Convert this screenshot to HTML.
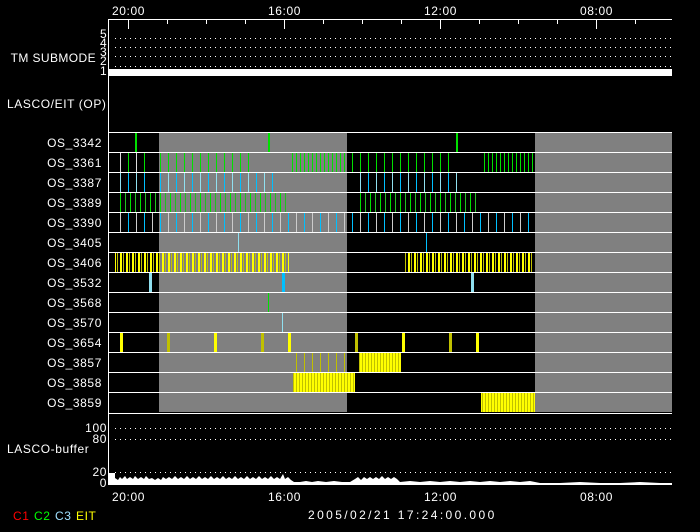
<!DOCTYPE html>
<html><head><style>
html,body{margin:0;padding:0;background:#000;width:700px;height:532px;overflow:hidden}
svg{display:block}
text{font-family:"Liberation Sans",sans-serif;font-size:12px;fill:#fff;letter-spacing:0.6px}
</style></head><body>
<svg width="700" height="532" viewBox="0 0 700 532" xmlns="http://www.w3.org/2000/svg">
<defs>
<pattern id="g8" width="8" height="20" patternUnits="userSpaceOnUse"><rect x="0" width="1" height="20" fill="#00e000"/></pattern>
<pattern id="g4" width="4" height="20" patternUnits="userSpaceOnUse"><rect x="0" width="1" height="20" fill="#00e000"/></pattern>
<pattern id="gw8" width="16" height="20" patternUnits="userSpaceOnUse"><rect x="0" width="1" height="20" fill="#00e000"/><rect x="8" width="1" height="20" fill="#ddd"/></pattern>
<pattern id="gm5" width="10" height="20" patternUnits="userSpaceOnUse"><rect x="0" width="1" height="20" fill="#00e000"/><rect x="5" width="1" height="20" fill="#20c020"/></pattern>
<pattern id="c8" width="16" height="20" patternUnits="userSpaceOnUse"><rect x="0" width="1" height="20" fill="#00c0ff"/><rect x="8" width="1" height="20" fill="#90e0f0"/></pattern>
<pattern id="cw8" width="16" height="20" patternUnits="userSpaceOnUse"><rect x="0" width="1" height="20" fill="#00c0ff"/><rect x="8" width="1" height="20" fill="#ccc"/></pattern>
<pattern id="y3" width="6" height="20" patternUnits="userSpaceOnUse"><rect x="0" width="2" height="20" fill="#ffff00"/><rect x="3" width="1" height="20" fill="#c0c000"/></pattern>
<pattern id="yd" width="3" height="20" patternUnits="userSpaceOnUse"><rect x="0" width="2" height="20" fill="#ffff00"/><rect x="2" width="1" height="20" fill="#c0c000"/></pattern>
<pattern id="y8" width="8" height="20" patternUnits="userSpaceOnUse"><rect x="0" width="1" height="20" fill="#c0c000"/></pattern>
<pattern id="dots" width="5" height="1" patternUnits="userSpaceOnUse"><rect width="1" height="1" fill="#fff"/></pattern>
</defs>

<rect x="108" y="19" width="564" height="1" fill="#fff"/>
<rect x="108" y="19" width="1" height="466" fill="#fff"/>
<g fill="#fff">
<rect x="128" y="19" width="1" height="10"/><rect x="167" y="19" width="1" height="5"/><rect x="206" y="19" width="1" height="5"/><rect x="245" y="19" width="1" height="5"/>
<rect x="284" y="19" width="1" height="10"/><rect x="323" y="19" width="1" height="5"/><rect x="362" y="19" width="1" height="5"/><rect x="401" y="19" width="1" height="5"/>
<rect x="440" y="19" width="1" height="10"/><rect x="479" y="19" width="1" height="5"/><rect x="518" y="19" width="1" height="5"/><rect x="557" y="19" width="1" height="5"/>
<rect x="596" y="19" width="1" height="10"/><rect x="635" y="19" width="1" height="5"/>
</g>
<g style="letter-spacing:1.2px"><text x="112" y="15">20:00</text><text x="268" y="15">16:00</text><text x="424" y="15">12:00</text><text x="580" y="15">08:00</text></g>

<rect x="113" y="38" width="559" height="1" fill="url(#dots)"/>
<rect x="113" y="47" width="559" height="1" fill="url(#dots)"/>
<rect x="113" y="56" width="559" height="1" fill="url(#dots)"/>
<rect x="113" y="66" width="559" height="1" fill="url(#dots)"/>
<rect x="109" y="69" width="563" height="7" fill="#fff"/>
<text x="96" y="62" text-anchor="end" style="letter-spacing:0.4px">TM SUBMODE</text>
<g style="font-size:10px;letter-spacing:0"><text x="100" y="38">5</text><text x="100" y="47">4</text><text x="100" y="56">3</text><text x="100" y="65">2</text><text x="100" y="75">1</text></g>
<text x="7" y="108">LASCO/EIT (OP)</text>

<rect x="159" y="132" width="188" height="280" fill="#808080"/>
<rect x="535" y="132" width="137" height="280" fill="#808080"/>

<g>
<rect x="135" y="133" width="2" height="19" fill="#00e000"/><rect x="268" y="133" width="2" height="19" fill="#00e000"/><rect x="456" y="133" width="2" height="19" fill="#00e000"/>
<rect x="119" y="153" width="32" height="19" fill="url(#gw8)"/>
<rect x="158" y="153" width="98" height="19" fill="url(#g8)"/>
<rect x="291" y="153" width="56" height="19" fill="url(#g4)"/>
<rect x="347" y="153" width="102" height="19" fill="url(#g8)"/>
<rect x="483" y="153" width="52" height="19" fill="url(#g4)"/>
<rect x="118" y="173" width="34" height="19" fill="url(#c8)"/>
<rect x="157" y="173" width="120" height="19" fill="url(#c8)"/>
<rect x="360" y="173" width="104" height="19" fill="url(#c8)"/>
<rect x="116" y="193" width="174" height="19" fill="url(#gm5)"/>
<rect x="358" y="193" width="118" height="19" fill="url(#gm5)"/>
<rect x="115" y="213" width="420" height="19" fill="url(#cw8)"/>
<rect x="238" y="233" width="1" height="19" fill="#90e0f0"/><rect x="426" y="233" width="1" height="19" fill="#00c0ff"/>
<rect x="115" y="253" width="174" height="19" fill="url(#y3)"/>
<rect x="405" y="253" width="128" height="19" fill="url(#y3)"/>
<rect x="149" y="273" width="3" height="19" fill="#90e0f0"/><rect x="282" y="273" width="3" height="19" fill="#00c0ff"/><rect x="471" y="273" width="3" height="19" fill="#90e0f0"/>
<rect x="268" y="293" width="1" height="19" fill="#00e000"/>
<rect x="282" y="313" width="1" height="19" fill="#90e0f0"/>
<g fill="#ffff00"><rect x="120" y="333" width="3" height="19"/><rect x="214" y="333" width="3" height="19"/><rect x="288" y="333" width="3" height="19"/><rect x="402" y="333" width="3" height="19"/><rect x="476" y="333" width="3" height="19"/></g>
<g fill="#c0c000"><rect x="167" y="333" width="3" height="19"/><rect x="261" y="333" width="3" height="19"/><rect x="355" y="333" width="3" height="19"/><rect x="449" y="333" width="3" height="19"/></g>
<rect x="292" y="353" width="57" height="19" fill="url(#y8)"/>
<rect x="359" y="353" width="42" height="19" fill="url(#yd)"/>
<rect x="293" y="373" width="62" height="19" fill="url(#yd)"/>
<rect x="481" y="393" width="54" height="19" fill="url(#yd)"/>
</g>

<g fill="#fff">
<rect x="108" y="132" width="564" height="1"/><rect x="108" y="152" width="564" height="1"/><rect x="108" y="172" width="564" height="1"/><rect x="108" y="192" width="564" height="1"/>
<rect x="108" y="212" width="564" height="1"/><rect x="108" y="232" width="564" height="1"/><rect x="108" y="252" width="564" height="1"/><rect x="108" y="272" width="564" height="1"/>
<rect x="108" y="292" width="564" height="1"/><rect x="108" y="312" width="564" height="1"/><rect x="108" y="332" width="564" height="1"/><rect x="108" y="352" width="564" height="1"/>
<rect x="108" y="372" width="564" height="1"/><rect x="108" y="392" width="564" height="1"/><rect x="108" y="413" width="564" height="1"/>
</g>

<g text-anchor="end" style="letter-spacing:1px">
<text x="102" y="147">OS_3342</text><text x="102" y="167">OS_3361</text><text x="102" y="187">OS_3387</text><text x="102" y="207">OS_3389</text>
<text x="102" y="227">OS_3390</text><text x="102" y="247">OS_3405</text><text x="102" y="267">OS_3406</text><text x="102" y="287">OS_3532</text>
<text x="102" y="307">OS_3568</text><text x="102" y="327">OS_3570</text><text x="102" y="347">OS_3654</text><text x="102" y="367">OS_3857</text>
<text x="102" y="387">OS_3858</text><text x="102" y="407">OS_3859</text>
</g>

<rect x="113" y="428" width="559" height="1" fill="url(#dots)"/>
<rect x="113" y="439" width="559" height="1" fill="url(#dots)"/>
<rect x="113" y="472" width="559" height="1" fill="url(#dots)"/>
<g text-anchor="end"><text x="107" y="432">100</text><text x="107" y="443">80</text><text x="107" y="476">20</text><text x="107" y="487">0</text></g>
<text x="7" y="453">LASCO-buffer</text>
<rect x="109" y="473" width="6" height="11" fill="#fff"/>
<polyline fill="#fff" stroke="none" points="115,484 115,478 118,480 120,477 122,479 125,476 127,479 130,477 133,479 135,476 138,479 141,477 144,479 146,476 149,479 152,478 155,480 158,478 161,480 163,477 166,479 169,477 172,479 175,476 178,479 181,477 184,479 187,476 190,479 193,477 196,479 199,476 202,479 205,477 208,479 211,476 214,479 217,477 220,479 223,476 226,479 229,477 232,479 235,476 238,479 241,477 244,479 247,476 250,479 253,477 256,479 259,476 262,479 265,477 268,479 271,476 274,479 277,477 280,479 283,474 285,479 288,477 291,480 294,482 300,482 306,481 312,482 318,481 326,482 334,481 342,482 350,482 355,479 358,477 361,480 364,477 367,479 370,477 373,479 376,477 379,479 382,476 385,479 388,477 391,479 394,477 397,479 400,482 410,481 420,482 430,481 440,482 450,481 460,482 470,481 480,482 490,481 500,482 510,481 520,482 530,481 540,483 560,483 580,482 600,483 620,483 640,482 660,483 672,483 672,484"/>
<rect x="108" y="484" width="564" height="1" fill="#fff"/>

<g style="letter-spacing:1.2px"><text x="112" y="501">20:00</text><text x="268" y="501">16:00</text><text x="424" y="501">12:00</text><text x="580" y="501">08:00</text></g>
<g style="font-size:10px"><text x="13" y="520" style="fill:#ff0000">C1</text><text x="34" y="520" style="fill:#00ff00">C2</text><text x="55" y="520" style="fill:#a0e0ff">C3</text><text x="76" y="520" style="fill:#ffff00">EIT</text></g>
<text x="308" y="519" style="letter-spacing:2.4px">2005/02/21 17:24:00.000</text>
</svg>
</body></html>
